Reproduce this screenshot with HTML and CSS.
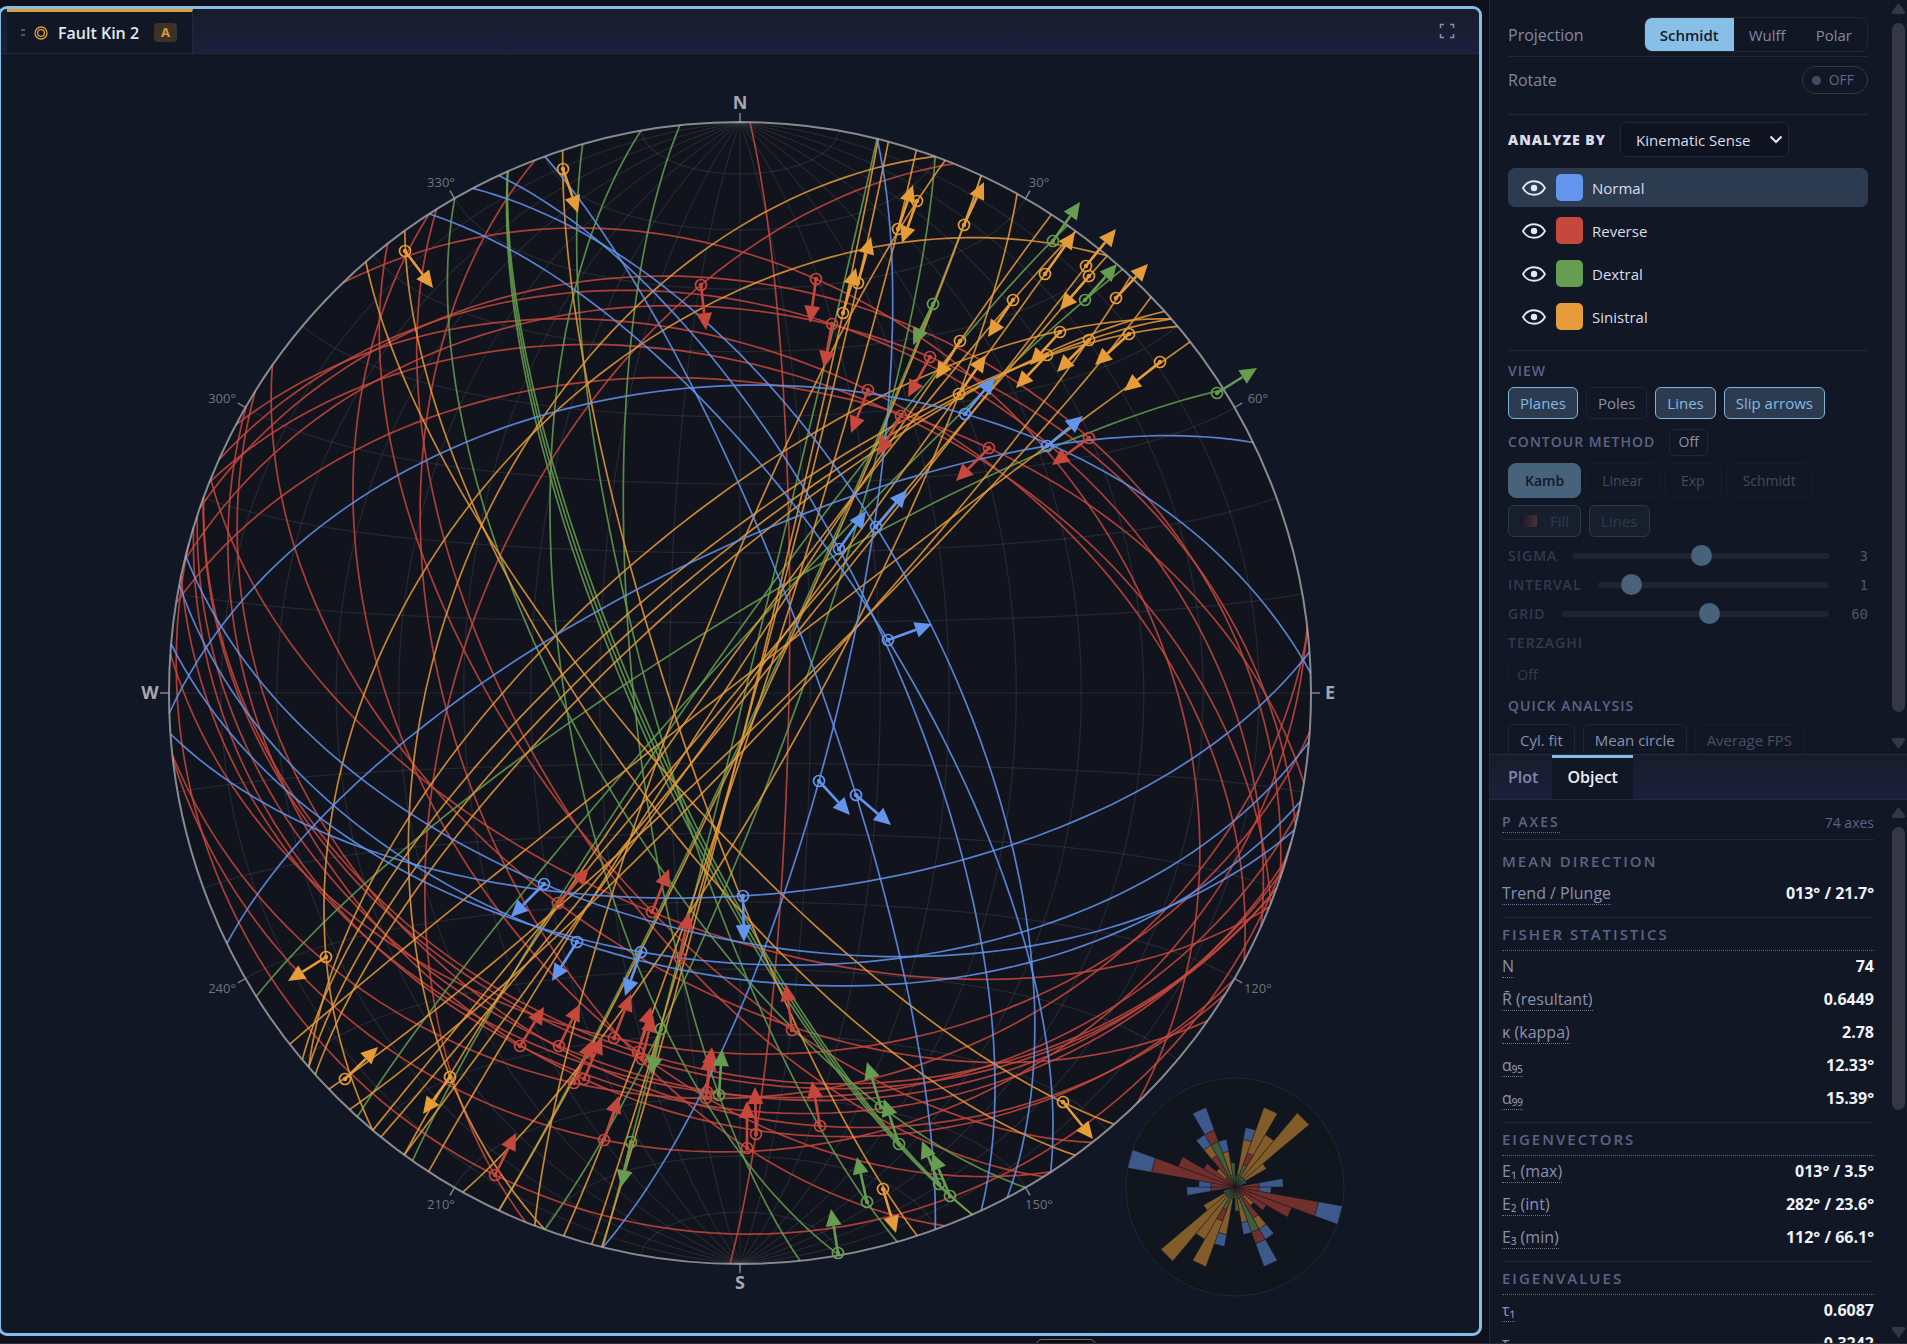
FILE: index.html
```html
<!DOCTYPE html>
<html lang="en">
<head>
<meta charset="utf-8">
<title>Fault Kin 2</title>
<link rel="stylesheet" href="styles.css">
</head>
<body>
<div class="app">
  <main class="workspace">
    <section class="panel">
      <header class="panel-bar">
        <div class="panel-tab">
          <span class="grip" aria-hidden="true"></span>
          <svg class="net-icon" viewBox="0 0 14 14" aria-hidden="true"><circle cx="7" cy="7" r="6"/><circle cx="7" cy="7" r="3.4"/></svg>
          <span class="panel-title">Fault Kin 2</span>
          <span class="badge">A</span>
        </div>
        <button class="expand" type="button" aria-label="Full screen">
          <svg viewBox="0 0 16 16"><path d="M1.5 5V1.5H5M11 1.5h3.500V5M14.500 11v3.500H11M5 14.500H1.500V11"/></svg>
        </button>
      </header>
      <svg id="stereonet" class="stereonet" viewBox="1 54 1478 1279" role="img" aria-label="Stereonet"></svg>
    </section>
  </main>

  <aside class="sidebar">
    <section class="pane controls">
      <div class="pane-body">
        <div class="row projection">
          <span class="row-label">Projection</span>
          <div class="segmented">
            <button type="button" class="seg active">Schmidt</button><button type="button" class="seg">Wulff</button><button type="button" class="seg">Polar</button>
          </div>
        </div>
        <div class="row rotate">
          <span class="row-label">Rotate</span>
          <button type="button" class="toggle"><span class="dot"></span>OFF</button>
        </div>
        <div class="analyze">
          <label class="analyze-label" for="analyze">ANALYZE BY</label>
          <span class="select-wrap">
            <select id="analyze"><option>Kinematic Sense</option></select>
            <svg viewBox="0 0 14 9" aria-hidden="true"><path d="M1.500 1.500 7 7l5.500-5.500"/></svg>
          </span>
        </div>
        <ul class="classes">
          <li class="class selected"><svg class="eye" viewBox="0 0 24 16"><path d="M1 8C6-1 18-1 23 8 18 17 6 17 1 8Z"/><circle cx="12" cy="8" r="3.200"/></svg><span class="swatch normal"></span>Normal</li>
          <li class="class"><svg class="eye" viewBox="0 0 24 16"><path d="M1 8C6-1 18-1 23 8 18 17 6 17 1 8Z"/><circle cx="12" cy="8" r="3.200"/></svg><span class="swatch reverse"></span>Reverse</li>
          <li class="class"><svg class="eye" viewBox="0 0 24 16"><path d="M1 8C6-1 18-1 23 8 18 17 6 17 1 8Z"/><circle cx="12" cy="8" r="3.200"/></svg><span class="swatch dextral"></span>Dextral</li>
          <li class="class"><svg class="eye" viewBox="0 0 24 16"><path d="M1 8C6-1 18-1 23 8 18 17 6 17 1 8Z"/><circle cx="12" cy="8" r="3.200"/></svg><span class="swatch sinistral"></span>Sinistral</li>
        </ul>
        <h3 class="caption">VIEW</h3>
        <div class="chips">
          <button type="button" class="chip on">Planes</button>
          <button type="button" class="chip">Poles</button>
          <button type="button" class="chip on">Lines</button>
          <button type="button" class="chip on">Slip arrows</button>
        </div>
        <div class="contour-head">
          <h3 class="caption">CONTOUR METHOD</h3>
          <button type="button" class="mini">Off</button>
        </div>
        <div class="methods">
          <button type="button" class="method active">Kamb</button>
          <button type="button" class="method">Linear</button>
          <button type="button" class="method">Exp</button>
          <button type="button" class="method">Schmidt</button>
        </div>
        <div class="chips faded">
          <button type="button" class="chip on"><span class="ramp"></span>Fill</button>
          <button type="button" class="chip on">Lines</button>
        </div>
        <div class="slider"><label for="sigma">SIGMA</label><input id="sigma" type="range" min="1" max="5" value="3"><output>3</output></div>
        <div class="slider"><label for="interval">INTERVAL</label><input id="interval" type="range" min="0.5" max="5" step="0.5" value="1"><output>1</output></div>
        <div class="slider"><label for="grid">GRID</label><input id="grid" type="range" min="10" max="100" value="60"><output>60</output></div>
        <h3 class="caption dim">TERZAGHI</h3>
        <button type="button" class="mini ghost">Off</button>
        <h3 class="caption quick">QUICK ANALYSIS</h3>
        <div class="chips">
          <button type="button" class="chip">Cyl. fit</button>
          <button type="button" class="chip">Mean circle</button>
          <button type="button" class="chip off">Average FPS</button>
        </div>
      </div>
      <div class="scrollbar" aria-hidden="true"><span class="arrow up"></span><span class="thumb upper"></span><span class="arrow down"></span></div>
    </section>

    <nav class="tabs">
      <button type="button" class="tab">Plot</button>
      <button type="button" class="tab active">Object</button>
    </nav>

    <section class="pane stats">
      <div class="pane-body">
        <div class="stat-head"><span class="stat-title">P AXES</span><span class="stat-count">74 axes</span></div>
        <h3 class="group plain">MEAN DIRECTION</h3>
        <table>
          <tr><th><span>Trend / Plunge</span></th><td>013° / 21.7°</td></tr>
        </table>
        <h3 class="group">FISHER STATISTICS</h3>
        <table>
          <tr><th><span>N</span></th><td>74</td></tr>
          <tr><th><span>R̄ (resultant)</span></th><td>0.6449</td></tr>
          <tr><th><span>κ (kappa)</span></th><td>2.78</td></tr>
          <tr><th><span>α₉₅</span></th><td>12.33°</td></tr>
          <tr><th><span>α₉₉</span></th><td>15.39°</td></tr>
        </table>
        <h3 class="group">EIGENVECTORS</h3>
        <table>
          <tr><th><span>E₁ (max)</span></th><td>013° / 3.5°</td></tr>
          <tr><th><span>E₂ (int)</span></th><td>282° / 23.6°</td></tr>
          <tr><th><span>E₃ (min)</span></th><td>112° / 66.1°</td></tr>
        </table>
        <h3 class="group">EIGENVALUES</h3>
        <table>
          <tr><th><span>τ₁</span></th><td>0.6087</td></tr>
          <tr><th><span>τ₂</span></th><td>0.3242</td></tr>
        </table>
      </div>
      <div class="scrollbar" aria-hidden="true"><span class="arrow up"></span><span class="thumb lower"></span><span class="arrow down"></span></div>
    </section>
  </aside>
  <button class="drawer" type="button" aria-label="Open drawer"></button>
</div>
<script src="stereonet.js"></script>
</body>
</html>
```
FILE: styles.css
```css
* { box-sizing: border-box; }
body {
  margin: 0;
  background: #0e111b;
  color: #d9dded;
  font: 15px/20px "Open Sans", "Noto Sans", sans-serif;
}
button, select, input { font: inherit; color: inherit; margin: 0; }
button { display: inline-flex; align-items: center; justify-content: center; background: none; border: 1px solid #22263a; padding: 0; white-space: nowrap; }
h3 { margin: 0; font-size: 15px; }
.app {
  position: relative;
  display: grid;
  grid-template-columns: minmax(0, 1fr) 418px;
  height: 100vh;
  border-bottom: 1px solid #2a2c38;
  overflow: hidden;
}

/* Plot panel */
.workspace { display: flex; min-width: 0; min-height: 0; padding: 6px 7px 7px 0; }
.panel {
  flex: 1;
  display: flex;
  flex-direction: column;
  min-width: 0;
  margin-left: -2px;
  border: 3px solid #85bde5;
  border-radius: 9px;
  background: #111724;
  overflow: hidden;
}
.panel-bar {
  display: flex;
  flex: none;
  justify-content: space-between;
  height: 45px;
  padding-left: 6px;
  border-bottom: 1px solid #252a3a;
  background: linear-gradient(#171d2b, #1c1f3c);
}
.panel-tab {
  display: flex;
  align-items: center;
  padding: 0 15px 0 14px;
  border-top: 3px solid #dd9f3c;
  border-right: 1px solid #252a3a;
  background: #111724;
}
.grip { width: 4px; height: 7px; border: solid #4c5268; border-width: 2px 0; }
.net-icon { width: 14px; height: 14px; margin: 0 10px 0 9px; fill: none; stroke: #dd9f3c; stroke-width: 1.3; }
.panel-title { font-size: 16px; font-weight: 600; color: #e4e8f3; }
.badge { margin-left: 15px; padding: 0 7px; border-radius: 4px; background: #3d3229; color: #dd9f3c; font-size: 13px; font-weight: 700; line-height: 19px; }
.expand { width: 32px; margin-right: 16px; border: 0; color: #8b91ab; }
.expand svg { width: 16px; height: 16px; fill: none; stroke: currentColor; stroke-width: 1.5; }
.stereonet { flex: 1; min-height: 0; width: 100%; }

/* Stereonet drawing */
.net-disc { fill: #11131d; }
.net-line { fill: none; stroke: #fff; stroke-opacity: .09; stroke-width: 1.2; }
.net-rim { fill: none; stroke: #a7a8ae; stroke-opacity: .8; stroke-width: 2; }
.net-tick { stroke: #8a8c94; stroke-width: 1.4; }
.compass { fill: #a4a7b0; font-size: 18px; font-weight: 700; text-anchor: middle; }
.degree { fill: #70747f; font-size: 13px; text-anchor: middle; }
.plane { fill: none; stroke-width: 1.7; stroke-opacity: .85; }
.slip { stroke-width: 2.6; }
.ring { fill: none; stroke-width: 1.7; }
.c-b { stroke: #6495ed; } .f-b { fill: #6495ed; }
.c-r { stroke: #c6483d; } .f-r { fill: #c6483d; }
.c-g { stroke: #679d50; } .f-g { fill: #679d50; }
.c-o { stroke: #e69c38; } .f-o { fill: #e69c38; }
.rose-disc { fill: #11151d; stroke: #242731; }
.petal { opacity: .53; stroke: #11151d; stroke-width: .5; }

/* Sidebar */
.sidebar {
  display: flex;
  flex-direction: column;
  min-height: 0;
  border-left: 1px solid #252734;
  background: #111724;
}
.pane { display: flex; min-height: 0; overflow: hidden; }
.pane-body { flex: 1; min-width: 0; }
.controls { flex: 0 0 754px; }
.controls .pane-body { padding: 14px 22px 0 18px; }
.row { display: flex; align-items: center; justify-content: space-between; color: #8187a6; }
.row-label { font-size: 16px; }
.projection { height: 43px; padding-bottom: 1px; border-bottom: 1px solid #252734; }
.rotate { height: 58px; padding-bottom: 11px; border-bottom: 1px solid #252734; }
.segmented { display: flex; height: 35px; border: 1px solid #252734; border-radius: 8px; overflow: hidden; }
.seg { padding: 0 15px; border: 0; font-size: 15px; }
.seg.active { background: #88bfe6; color: #131a29; font-weight: 600; }
.toggle { gap: 8px; height: 28px; padding: 0 13px 0 9px; border-color: #33374a; border-radius: 14px; color: #5f6888; font-size: 14px; }
.dot { width: 9px; height: 9px; border-radius: 50%; background: #454a62; }
.analyze { display: flex; align-items: center; gap: 14px; height: 49px; }
.analyze-label { font-weight: 800; font-size: 14px; letter-spacing: 1px; }
.select-wrap { display: grid; align-items: center; }
.select-wrap > * { grid-area: 1 / 1; }
.select-wrap svg { justify-self: end; width: 14px; height: 9px; margin-right: 6px; fill: none; stroke: #e4e8f3; stroke-width: 2; pointer-events: none; }
select { appearance: none; width: 169px; height: 35px; padding: 0 24px 0 15px; border: 1px solid #22263a; border-radius: 6px; background: #0e131f; font-size: 15px; }
.classes { display: flex; flex-direction: column; gap: 4px; margin: 4px 0 0; padding: 0 0 14px; border-bottom: 1px solid #252734; list-style: none; }
.class { display: flex; align-items: center; height: 39px; padding-left: 14px; border-radius: 7px; font-size: 15px; }
.class.selected { background: #2c3b50; }
.eye { width: 24px; height: 16px; fill: none; stroke: #e4e8f3; stroke-width: 1.8; }
.eye circle { fill: #e4e8f3; stroke: none; }
.swatch { width: 27px; height: 27px; margin: 0 9px 0 10px; border-radius: 5px; }
.swatch.normal { background: #6495ed; }
.swatch.reverse { background: #c6483d; }
.swatch.dextral { background: #679d50; }
.swatch.sinistral { background: #e69c38; }
.caption { color: #5c6484; font-size: 14px; font-weight: 600; line-height: 20px; letter-spacing: 1px; }
.classes + .caption { margin: 10px 0 6px; }
.chips { display: flex; gap: 8px; }
.chip { height: 32px; padding: 0 11px; border-radius: 6px; color: #8b90ad; font-size: 15px; }
.chip.on { border-color: #7db4dc; background: #2c3b50; color: #83b9e0; }
.contour-head { display: flex; align-items: center; gap: 14px; margin: 9px 0 7px; height: 28px; }
.mini { width: 39px; height: 27px; border-radius: 6px; color: #8b90ad; font-size: 14px; }
.methods { display: flex; gap: 4px; opacity: .45; }
.method { height: 35px; padding: 0 16px; border-radius: 8px; color: #8187a6; font-size: 14px; }
.method.active { border-color: #88bfe6; background: #88bfe6; color: #131a29; font-weight: 600; }
.faded { margin: 7px 0 4px; opacity: .22; }
.ramp { width: 17px; height: 12px; margin-right: 13px; border-radius: 2px; background: linear-gradient(90deg, #2a104f, #b1406a, #f2a65a); }
.slider { display: flex; align-items: center; height: 29px; opacity: .45; }
.slider label { color: #5c6484; font-size: 14px; font-weight: 600; letter-spacing: 1px; }
.slider input { flex: 1; min-width: 0; height: 21px; margin: 0 10px 0 16px; appearance: none; background: none; }
.slider input::-webkit-slider-runnable-track { height: 6px; border-radius: 3px; background: #30353e; }
.slider input::-webkit-slider-thumb { appearance: none; width: 21px; height: 21px; margin-top: -8px; border-radius: 50%; background: #88bfe6; }
.slider output { width: 29px; color: #9a9eae; font: 14px/20px "DejaVu Sans Mono", monospace; text-align: right; }
.dim { margin: 5px 0 8px; opacity: .45; }
.ghost { opacity: .3; }
.quick { margin: 8px 0; }
.chip.off { opacity: .45; }

.scrollbar { flex: none; display: flex; flex-direction: column; align-items: center; width: 17px; }
.arrow { flex: none; width: 14px; height: 11px; background: #353843; }
.arrow.up { margin: 3px 0 9px; clip-path: polygon(50% 0, 100% 85%, 90% 100%, 10% 100%, 0 85%); }
.arrow.down { margin: auto 0 5px; clip-path: polygon(50% 100%, 100% 15%, 90% 0, 10% 0, 0 15%); }
.thumb { width: 13px; border-radius: 7px; background: #353843; }
.thumb.upper { height: 689px; }
.thumb.lower { height: 283px; }

.tabs { flex: none; display: flex; height: 46px; border: solid #252a3a; border-width: 1px 0; background: linear-gradient(#171d2b, #1c1f3c); }
.tab { padding: 0 14px 3px 18px; border: 0; border-top: 3px solid transparent; color: #8187ae; font-size: 16px; font-weight: 600; }
.tab.active { padding: 0 15px 3px; border-top-color: #85bde5; background: #111724; color: #eef1f8; }

.stats { flex: 1; }
.stats .pane-body { padding: 6px 16px 0 12px; }
.stats .arrow.up { margin-top: 7px; }
.stat-head { display: flex; align-items: center; justify-content: space-between; height: 34px; border-bottom: 1px solid #252734; color: #5c6484; font-size: 14px; }
.stat-title { font-weight: 600; letter-spacing: 2px; border-bottom: 1px dotted #5c6484; }
.group { height: 34px; border-top: 1px solid #252734; border-bottom: 1px dotted #5c6484; color: #5c6484; font-size: 15px; font-weight: 600; line-height: 33px; letter-spacing: 2px; }
.group.plain { margin-top: 4px; border-color: transparent; }
table { width: 100%; margin-bottom: 6px; border-spacing: 0; font-size: 16px; }
tr { height: 33px; }
th, td { padding: 0 0 3px; line-height: 20px; }
th { color: #8b90ad; font-weight: 400; text-align: left; }
th span { border-bottom: 1px dotted #6a7090; }
td { color: #eef1f8; font-weight: 700; text-align: right; }

.drawer { position: absolute; left: 1036px; bottom: -15px; width: 60px; height: 19px; border: 1px solid #6a6c74; border-radius: 6px; background: #0b0d13; }
```
FILE: stereonet.js
```javascript
// Lower-hemisphere equal-area net: planes, slickenline markers, slip arrows, rose.
const CX = 740, CY = 693, R = 571;
const svg = document.getElementById('stereonet');
const NS = 'http://www.w3.org/2000/svg';

function add(tag, attrs, text) {
  const el = document.createElementNS(NS, tag);
  for (const k in attrs) el.setAttribute(k, attrs[k]);
  if (text) el.textContent = text;
  svg.appendChild(el);
  return el;
}

// Vectors are [east, north, down].
const dot = (a, b) => a[0] * b[0] + a[1] * b[1] + a[2] * b[2];
function unit(v) { const m = Math.hypot(...v); return v.map(c => c / m); }
function project(v) {
  const h = Math.hypot(v[0], v[1]);
  if (h < 1e-9) return [CX, CY];
  const r = R * Math.sqrt(Math.max(0, 1 - v[2]));
  return [CX + r * v[0] / h, CY - r * v[1] / h];
}
function unproject(x, y) {
  const dx = (x - CX) / R, dy = (CY - y) / R;
  const r = Math.min(1, Math.hypot(dx, dy));
  const d = 1 - r * r, h = Math.sqrt(1 - d * d), m = Math.hypot(dx, dy);
  return [h * dx / m, h * dy / m, d];
}
function curve(fn, n) {
  let d = '';
  for (let i = 0; i <= n; i++) {
    const p = project(fn(Math.PI * i / n));
    d += (i ? 'L' : 'M') + p[0].toFixed(1) + ' ' + p[1].toFixed(1);
  }
  return d;
}
const mix = (a, ca, b, cb) => a.map((v, i) => v * ca + b[i] * cb);

add('circle', { cx: CX, cy: CY, r: R, class: 'net-disc' });
for (let a = 10; a <= 170; a += 10) {
  const t = a * Math.PI / 180;
  const u = [Math.cos(t), 0, Math.sin(t)];
  add('path', { d: curve(s => mix([0, 1, 0], Math.cos(s), u, Math.sin(s)), 90), class: 'net-line' });
  const c = Math.cos(t), k = Math.sin(t);
  add('path', { d: curve(s => [k * Math.cos(s), c, k * Math.sin(s)], 90), class: 'net-line' });
}

// Each plane: class, rim point, point on the trace.
const planes = [
  ['r', 343, 283, 816, 279], ['r', 200, 508, 1089, 438], ['r', 219, 460, 832, 324],
  ['r', 186, 561, 930, 357], ['r', 236, 425, 868, 390], ['r', 211, 483, 901, 416],
  ['r', 176, 603, 989, 448], ['r', 526, 1222, 701, 285],
  ['r', 211, 479, 652, 912], ['r', 272, 365, 558, 903], ['r', 189, 544, 495, 1175],
  ['r', 173, 759, 604, 1140], ['r', 173, 755, 574, 1083], ['r', 535, 160, 747, 1148],
  ['r', 437, 210, 680, 958], ['r', 429, 214, 707, 1098], ['r', 388, 244, 792, 1030],
  ['r', 750, 123, 756, 1134], ['r', 171, 654, 614, 1038], ['r', 182, 576, 707, 1092],
  ['r', 195, 528, 520, 1046], ['r', 198, 516, 559, 1046], ['r', 204, 498, 638, 1052],
  ['r', 204, 498, 642, 1059], ['r', 256, 392, 820, 1126], ['r', 247, 407, 584, 1079],
  ['g', 1223, 390, 1040, 453], ['g', 1122, 270, 600, 800], ['g', 1067, 226, 960, 343],
  ['g', 981, 176, 933, 304], ['g', 935, 157, 661, 1029], ['g', 603, 1247, 631, 1142],
  ['g', 680, 126, 719, 1095], ['g', 641, 131, 550, 511], ['g', 583, 145, 606, 511],
  ['g', 508, 172, 613, 660], ['g', 508, 172, 621, 660], ['g', 508, 172, 617, 660],
  ['g', 455, 199, 466, 439],
  ['o', 1190, 342, 1047, 446], ['o', 1177, 327, 840, 457], ['o', 1171, 319, 840, 418],
  ['o', 1171, 319, 840, 467], ['o', 1164, 312, 840, 475], ['o', 1151, 297, 1051, 420],
  ['o', 1130, 277, 1030, 420], ['o', 1107, 256, 1000, 380], ['o', 1099, 249, 990, 390],
  ['o', 1075, 232, 1013, 300], ['o', 1075, 232, 1045, 274], ['o', 1051, 215, 960, 341],
  ['o', 1017, 194, 959, 394], ['o', 981, 176, 964, 225], ['o', 945, 161, 580, 1003],
  ['o', 935, 157, 450, 1077], ['o', 916, 151, 898, 229], ['o', 888, 143, 858, 283],
  ['o', 878, 140, 843, 313], ['o', 1107, 256, 326, 957], ['o', 563, 151, 590, 396],
  ['o', 405, 231, 474, 507], ['o', 366, 262, 481, 525],
  ['b', 430, 215, 888, 640], ['b', 473, 189, 876, 527], ['b', 499, 176, 839, 549],
  ['b', 545, 157, 856, 795], ['b', 186, 556, 544, 884], ['b', 180, 585, 577, 942],
  ['b', 171, 644, 641, 952], ['b', 170, 713, 965, 414], ['b', 171, 734, 743, 896],
  ['b', 228, 943, 1047, 446], ['b', 603, 1247, 819, 781]
];
for (const [c, ex, ey, px, py] of planes) {
  const e = unit([ex - CX, CY - ey, 0]);
  const p = unproject(px, py);
  const u = unit(mix(p, 1, e, -dot(p, e)));
  add('path', { d: curve(s => mix(e, Math.cos(s), u, Math.sin(s)), 90), class: 'plane c-' + c });
}

add('circle', { cx: CX, cy: CY, r: R, class: 'net-rim' });
for (let a = 0; a < 360; a += 30) {
  const s = Math.sin(a * Math.PI / 180), c = -Math.cos(a * Math.PI / 180);
  add('line', { x1: CX + R * s, y1: CY + R * c, x2: CX + (R + 9) * s, y2: CY + (R + 9) * c, class: 'net-tick' });
  if (a % 90) add('text', { x: CX + 598 * s, y: CY + 590 * c + 5, class: 'degree' }, a + '°');
  else add('text', { x: CX + 590 * s, y: CY + 590 * c + 6, class: 'compass' }, 'NESW'[a / 90]);
}

// Each marker: class, line position, arrow tip.
const lines = [
  ['r', 701, 285, 706, 330], ['r', 816, 279, 810, 323], ['r', 832, 324, 824, 368],
  ['r', 930, 357, 908, 397], ['r', 868, 390, 851, 433], ['r', 901, 416, 878, 455],
  ['r', 989, 448, 956, 481], ['r', 1089, 438, 1052, 465], ['r', 558, 903, 589, 868],
  ['r', 652, 912, 669, 869], ['r', 680, 958, 689, 912], ['r', 520, 1046, 544, 1007],
  ['r', 559, 1046, 580, 1004], ['r', 614, 1038, 631, 994], ['r', 638, 1052, 651, 1007],
  ['r', 642, 1059, 653, 1015], ['r', 574, 1083, 593, 1040], ['r', 584, 1079, 602, 1037],
  ['r', 706, 1098, 710, 1053], ['r', 707, 1092, 712, 1047], ['r', 604, 1140, 619, 1096],
  ['r', 495, 1175, 516, 1133], ['r', 792, 1030, 786, 984], ['r', 820, 1126, 812, 1081],
  ['r', 756, 1134, 755, 1087], ['r', 747, 1148, 747, 1101],
  ['g', 1053, 241, 1080, 202], ['g', 1085, 300, 1117, 264], ['g', 933, 304, 913, 345],
  ['g', 1217, 393, 1257, 368], ['g', 661, 1029, 651, 1074], ['g', 631, 1142, 621, 1187],
  ['g', 719, 1095, 722, 1049], ['g', 838, 1253, 831, 1209], ['g', 881, 1107, 867, 1062],
  ['g', 899, 1144, 884, 1099], ['g', 939, 1184, 922, 1141], ['g', 950, 1196, 932, 1153],
  ['g', 867, 1202, 857, 1157],
  ['o', 898, 229, 913, 185], ['o', 917, 201, 902, 243], ['o', 964, 225, 984, 182],
  ['o', 858, 283, 871, 237], ['o', 843, 313, 856, 268], ['o', 1013, 300, 988, 337],
  ['o', 1045, 274, 1075, 232], ['o', 1086, 266, 1116, 229], ['o', 1089, 276, 1060, 310],
  ['o', 1116, 298, 1148, 264], ['o', 1060, 332, 1030, 365], ['o', 1089, 340, 1057, 372],
  ['o', 1047, 355, 1016, 388], ['o', 1129, 334, 1095, 365], ['o', 1160, 362, 1124, 391],
  ['o', 960, 341, 936, 379], ['o', 959, 394, 986, 355], ['o', 563, 169, 578, 213],
  ['o', 405, 251, 433, 288], ['o', 326, 957, 288, 981], ['o', 345, 1079, 378, 1047],
  ['o', 450, 1077, 423, 1114], ['o', 1063, 1102, 1093, 1139], ['o', 883, 1189, 896, 1233],
  ['b', 965, 414, 995, 377], ['b', 1047, 446, 1083, 416], ['b', 876, 527, 907, 490],
  ['b', 839, 549, 866, 511], ['b', 888, 640, 932, 624], ['b', 819, 781, 850, 815],
  ['b', 856, 795, 891, 825], ['b', 544, 884, 511, 917], ['b', 577, 942, 552, 981],
  ['b', 641, 952, 625, 996], ['b', 743, 896, 744, 942]
];
for (const [c, x, y, tx, ty] of lines) {
  const m = Math.hypot(tx - x, ty - y), ux = (tx - x) / m, uy = (ty - y) / m;
  const bx = tx - 17 * ux, by = ty - 17 * uy;
  add('circle', { cx: x, cy: y, r: 5.5, class: 'ring c-' + c });
  add('circle', { cx: x, cy: y, r: 2.2, class: 'f-' + c });
  add('line', { x1: x, y1: y, x2: bx, y2: by, class: 'slip c-' + c });
  add('polygon', {
    points: `${tx},${ty} ${bx - 8 * uy},${by + 8 * ux} ${bx + 8 * uy},${by - 8 * ux}`,
    class: 'f-' + c
  });
}

// Strike rose: ten-degree bins from north, stacked by class.
const rose = ['r', 'gooob', 'ggroooo', 'goooo', 'gooooooo', 'goo', 'b', '', 'rrbb',
  'rrb', 'rrrrrrrbb', 'rrrrr', 'rrr', 'ro', 'rrrob', 'ggggrbb', 'goob', 'gg'];
const RX = 1235, RY = 1187, RR = 109;
add('circle', { cx: RX, cy: RY, r: RR, class: 'rose-disc' });
const at = (r, deg) => {
  const t = deg * Math.PI / 180;
  return (RX + r * Math.sin(t)).toFixed(1) + ' ' + (RY - r * Math.cos(t)).toFixed(1);
};
rose.forEach((bin, i) => {
  for (const side of [0, 180]) {
    const a = i * 10 + side, b = a + 10;
    for (let s = 0; s < bin.length;) {
      let e = s;
      while (bin[e] === bin[s]) e++;
      const r0 = s * RR / 9, r1 = e * RR / 9;
      add('path', { d: `M${at(r0, a)}L${at(r1, a)}L${at(r1, b)}L${at(r0, b)}Z`, class: 'petal f-' + bin[s] });
      s = e;
    }
  }
});
```
